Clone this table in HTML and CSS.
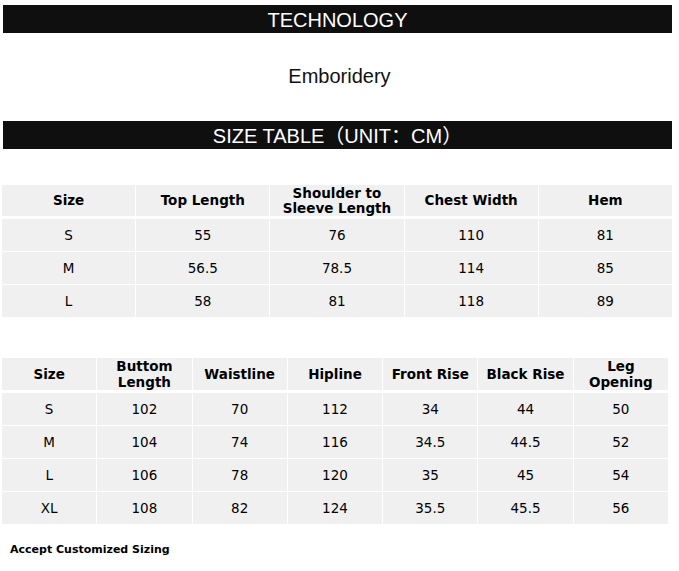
FILE: index.html
```html
<!DOCTYPE html>
<html>
<head>
<meta charset="utf-8">
<link rel="stylesheet" href="styles.css">
</head>
<body>
<div class="page">
  <div class="bar">TECHNOLOGY</div>
  <div class="tech">Emboridery</div>
  <div class="bar bar-size">SIZE TABLE（UNIT：CM）</div>
  <table class="size size-top">
    <thead>
      <tr><th>Size</th><th>Top Length</th><th>Shoulder to<br>Sleeve Length</th><th>Chest Width</th><th>Hem</th></tr>
    </thead>
    <tbody>
      <tr><td>S</td><td>55</td><td>76</td><td>110</td><td>81</td></tr>
      <tr><td>M</td><td>56.5</td><td>78.5</td><td>114</td><td>85</td></tr>
      <tr><td>L</td><td>58</td><td>81</td><td>118</td><td>89</td></tr>
    </tbody>
  </table>
  <table class="size size-bottom">
    <thead>
      <tr><th>Size</th><th>Buttom<br>Length</th><th>Waistline</th><th>Hipline</th><th>Front Rise</th><th>Black Rise</th><th>Leg<br>Opening</th></tr>
    </thead>
    <tbody>
      <tr><td>S</td><td>102</td><td>70</td><td>112</td><td>34</td><td>44</td><td>50</td></tr>
      <tr><td>M</td><td>104</td><td>74</td><td>116</td><td>34.5</td><td>44.5</td><td>52</td></tr>
      <tr><td>L</td><td>106</td><td>78</td><td>120</td><td>35</td><td>45</td><td>54</td></tr>
      <tr><td>XL</td><td>108</td><td>82</td><td>124</td><td>35.5</td><td>45.5</td><td>56</td></tr>
    </tbody>
  </table>
  <p class="note">Accept Customized Sizing</p>
</div>
</body>
</html>
```
FILE: styles.css
```css
html, body {
  margin: 0;
  padding: 0;
  background: #fff;
}

.page {
  padding-top: 5px;
  font-family: "DejaVu Sans", Verdana, sans-serif;
  color: #000;
}

.bar {
  margin-left: 3px;
  width: 669px;
  height: 28px;
  line-height: 31px;
  overflow: hidden;
  background: #0f0f0f;
  color: #fff;
  text-align: center;
  font-family: "Liberation Sans", Arial, "Noto Sans CJK SC", sans-serif;
  font-size: 20px;
}

.tech {
  margin: 31px 0 33px;
  height: 24px;
  line-height: 24px;
  text-align: center;
  font-family: "Liberation Sans", Arial, sans-serif;
  font-size: 20px;
  color: #111;
}

.size {
  margin-left: 1px;
  border-collapse: separate;
  border-spacing: 1px;
  table-layout: fixed;
  font-size: 13.5px;
  text-align: center;
}

.size th,
.size td {
  background: #f0f0f0;
  padding: 0;
  vertical-align: middle;
}

.size th {
  font-weight: bold;
  border-bottom: 2px solid #fff;
}

.size-top {
  width: 672px;
  margin-top: 35px;
}

.size-top th {
  height: 31px;
  line-height: 15px;
}

.size-top td {
  height: 32px;
}

.size-bottom {
  width: 668px;
  margin-top: 39px;
}

.size-bottom th {
  height: 32px;
  line-height: 16px;
}

.size-bottom td {
  height: 32px;
}

.note {
  margin: 18px 0 0 10px;
  font-size: 11px;
  line-height: 13px;
  font-weight: bold;
}
```
